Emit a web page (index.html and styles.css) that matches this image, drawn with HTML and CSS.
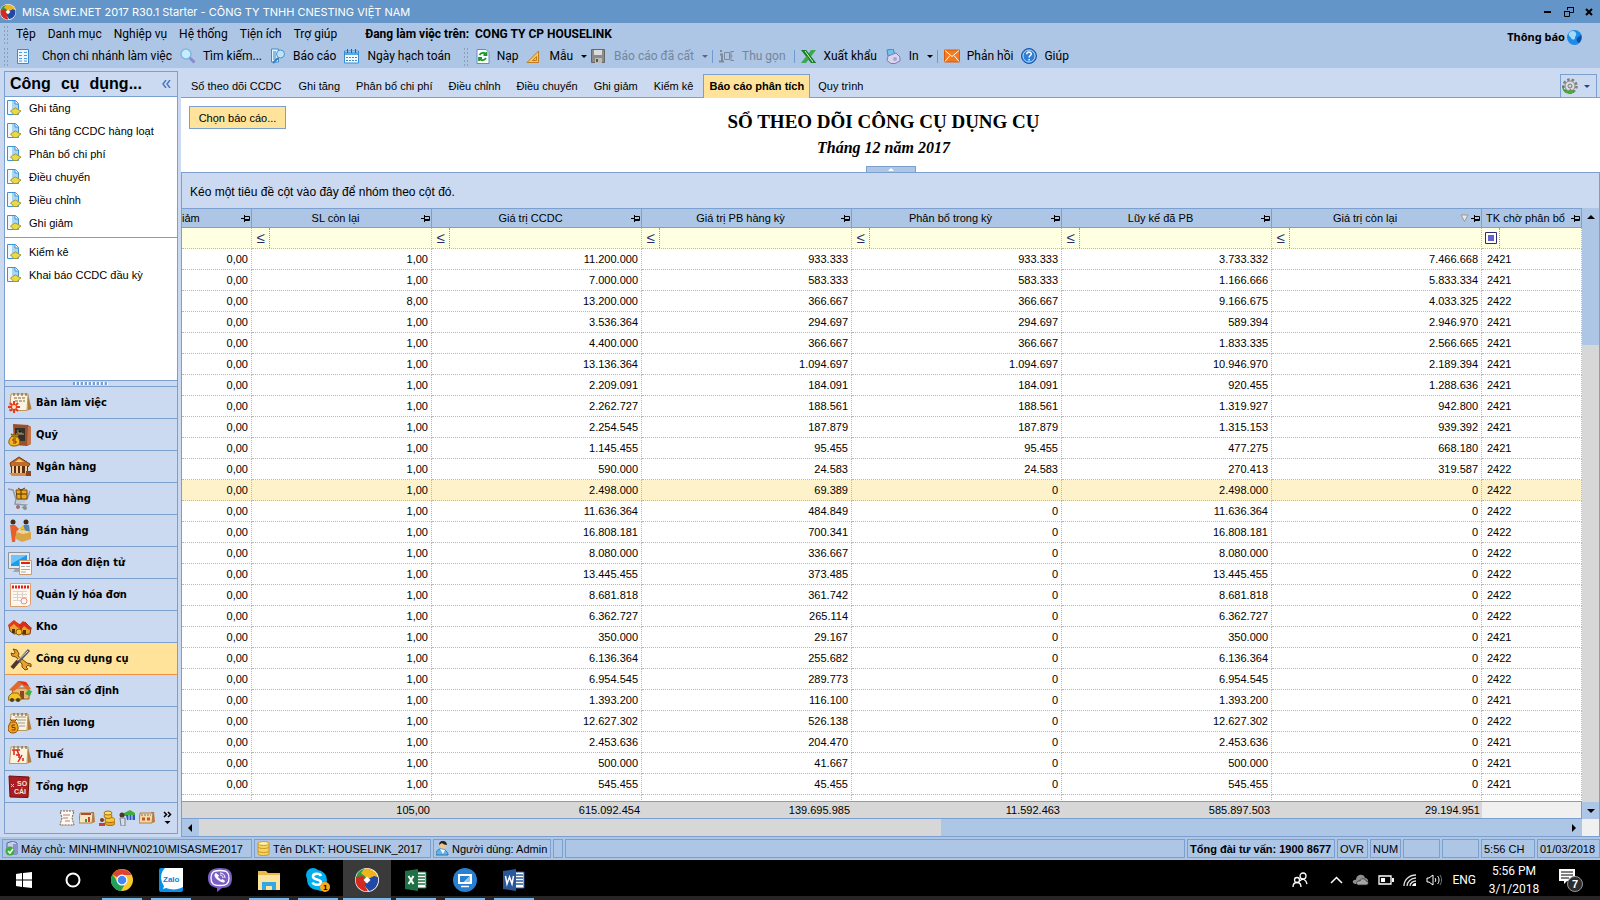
FILE: index.html
```html
<!DOCTYPE html>
<html lang="vi">
<head>
<meta charset="utf-8">
<meta name="viewport" content="width=device-width, initial-scale=1">
<title>MISA SME.NET 2017</title>
<link rel="stylesheet" href="styles.css">
</head>
<body>

<!-- shared icons -->
<svg class="defs" aria-hidden="true">
  <symbol id="pin" viewBox="0 0 9 9"><path d="M0 4.500h3M3.500 1v7M4 2.500h4.500v4H4M4 5.500h4" stroke="#000" fill="none"/></symbol>
  <symbol id="misa" viewBox="0 0 24 24">
    <circle cx="12" cy="12" r="12" fill="#fff"/>
    <path d="M12 12L1 9A11.300 11.300 0 0 1 9 1.100L17 6z" fill="#2f9a3f"/>
    <path d="M9 1A11.300 11.300 0 0 1 22.500 8L17 14 12 10 6 5z" fill="#f0b51c"/>
    <path d="M22.800 9A11.300 11.300 0 0 1 14 23L9 17l4-6 6-3z" fill="#2247a5"/>
    <path d="M1 9l7-1 3 5-1 5 3 5.200A11.300 11.300 0 0 1 1 9z" fill="#d22a20"/>
    <path d="M12 8.500l3.500 3.500-3.500 3.500L8.500 12z" fill="#fff"/>
  </symbol>
  <symbol id="doc" viewBox="0 0 14 15">
    <path d="M.5.500h8l3 3v11H.5z" fill="#eef7fe" stroke="#3f92d0"/><path d="M5 1h3l3 3v5H5z" fill="#a9d4f3"/><path d="M8 .5v3.500h3.500" fill="#fff" stroke="#3f92d0"/>
    <path d="M3.500 11l2-1.500 3-1.500 2.500 1.500 3 1.500-2 1.500-2 2H6.500l-1-1.500z" fill="#e8d94a" stroke="#a8972a"/>
  </symbol>
  <symbol id="calendar" viewBox="0 0 24 20">
    <path d="M20 2l3.500 15-4 1.500z" fill="#b07a3c"/><path d="M3 2h17l-1 16.500H1.500z" fill="#fbf3dc" stroke="#b99865"/><path d="M6 1v3M10 1v3M14 1v3M18 1v3" stroke="#6b5433"/>
  </symbol>
</svg>

<header class="titlebar">
  <svg class="logo"><use href="#misa"/></svg>
  <h1>MISA SME.NET 2017 R30.1 Starter - CÔNG TY TNHH CNESTING VIỆT NAM</h1>
  <button class="win" aria-label="Minimize"><svg width="12" height="12"><path d="M2 6h7" stroke="#000" stroke-width="2"/></svg></button>
  <button class="win" aria-label="Restore"><svg width="12" height="12"><path d="M4.500 4V1.500h6v5H7M4 1.500h7M1.500 5.500h5v5h-5zM1 5.500h6" stroke="#000" fill="none"/></svg></button>
  <button class="win" aria-label="Close"><svg width="12" height="12"><path d="M2 3l6 6M8 3l-6 6" stroke="#000" stroke-width="2"/></svg></button>
</header>

<div class="commands">
  <div class="bars">
    <nav class="menu">
      <i class="grip"></i>
      <button>Tệp</button><button>Danh mục</button><button>Nghiệp vụ</button><button>Hệ thống</button><button>Tiện ích</button><button>Trợ giúp</button>
      <b class="company"><span>Đang làm việc trên:</span> <span>CONG TY CP HOUSELINK</span></b>
    </nav>
    <div class="toolbar">
      <i class="grip"></i>
      <button class="wide"><svg width="14" height="15"><path d="M1.500.500h11v14h-11z" fill="#eef6fd" stroke="#3b8ccc"/><path d="M3 3.500h3M3 6.500h3M3 9.500h3M3 12h3M8 3.500h3M8 6.500h3M8 9.500h3M8 12h3" stroke="#4a9bd8"/></svg>Chọn chi nhánh làm việc</button>
      <button><svg width="16" height="16"><path d="M9.500 9.500l5 5" stroke="#8c8ad0" stroke-width="3"/><circle cx="6" cy="6" r="5" fill="#c9ecfb" stroke="#7db8e2" stroke-width="1.500"/></svg>Tìm kiếm...</button>
      <button><svg width="16" height="16"><path d="M1.500 1h7v13h-7z" fill="#e8f4fd" stroke="#3b8ccc"/><path d="M3 3h3v9H3z" fill="#82bce8"/><path d="M8 10l-5 5" stroke="#3b7cc0" stroke-width="2"/><circle cx="10.500" cy="6" r="4" fill="#bfe2f7" stroke="#4a94cc"/></svg>Báo cáo</button>
      <button><svg width="16" height="15"><path d="M.5 2h14v12H.5z" fill="#f2f9fe" stroke="#3b8ccc"/><path d="M1 3h13v3H1z" fill="#57a9e0"/><path d="M3.500 0v4M7.500 0v4M11.500 0v4" stroke="#1b65a5"/><path d="M2 8.500h11M2 11.500h11" stroke="#3b8ccc" stroke-dasharray="2 1"/></svg>Ngày hạch toán</button>
      <i class="grip"></i>
      <button><svg width="14" height="15"><path d="M1 .500h9l3 3v11H1z" fill="#fff" stroke="#6a86c4"/><path d="M3.500 6C5 3.500 8 3 9.500 5M10.500 3v3h-3M10 9c-1.500 2.500-4.500 3-6 1M3 12V9h3" fill="none" stroke="#179a27" stroke-width="1.800"/></svg>Nạp</button>
      <button class="drop"><svg width="15" height="15"><path d="M1 13.500L12.500 2v11.500z" fill="#f7c95c" stroke="#c07c1e"/><path d="M6.500 11.500l4-4v4z" fill="#adc6e5" stroke="#c07c1e"/></svg>Mẫu<i class="caret"></i></button>
      <button class="drop" disabled><svg width="15" height="15"><path d="M.5.500h13v13H.5z" fill="#8b8b8b" stroke="#666"/><path d="M3 1h8v5H3z" fill="#dcdcdc"/><path d="M4 9h7v5H4z" fill="#bcbcbc"/><path d="M5 10h2v3H5z" fill="#555"/></svg>Báo cáo đã cất<i class="caret"></i></button>
      <i class="sep"></i>
      <button disabled><svg width="16" height="14"><path d="M1 5.500h2v7M0 12.500h5M2 1v2" fill="none" stroke="#7e8a99" stroke-width="2"/><path d="M5.500 3.500h5v7h-5zM10.500 7h3M12 2v10M12 2.500h3M12 11.500h3" fill="none" stroke="#7e8a99"/></svg>Thu gọn</button>
      <i class="sep"></i>
      <button><svg width="16" height="15"><path d="M0 1h5l10 13h-5z" fill="#1c7d29"/><path d="M15 1h-5L0 14h5z" fill="#3cab43"/><path d="M1 1h4l10 13h-4z" fill="#1c7d29"/><path d="M4 2l8 11" stroke="#d9f1d6"/></svg>Xuất khẩu</button>
      <button class="drop"><svg width="16" height="15"><path d="M2 1l6-1 2 6-7 1z" fill="#6fc3ec" stroke="#4187bb"/><path d="M3 7l8-3 4 4v4l-5 2.500H6l-4-3z" fill="#d9d5ee" stroke="#8279b8"/><circle cx="10" cy="10" r="2" fill="#aaa2d6"/></svg>In<i class="caret"></i></button>
      <i class="sep"></i>
      <button><svg width="16" height="14"><path d="M.5 1h15v12H.5z" fill="#f47a20" stroke="#d85a0c"/><path d="M1 1.500l7 6 7-6M1 12.500l5-6M15 12.500l-5-6" fill="none" stroke="#fff"/></svg>Phản hồi</button>
      <button><svg width="16" height="16"><circle cx="8" cy="8" r="7.500" fill="#2f7fd6" stroke="#1a56a5"/><circle cx="8" cy="8" r="6" fill="none" stroke="#b9dcfa"/><path d="M5.800 6.300c0-3 4.500-2.800 4.500-.3 0 1.600-2.200 1.500-2.200 3.500M8.100 11v1.500" fill="none" stroke="#fff" stroke-width="1.500"/></svg>Giúp</button>
    </div>
  </div>
  <a class="notice" href="#">Thông báo<svg width="15" height="15"><circle cx="7.500" cy="7.500" r="7.500" fill="#1d8be8"/><path d="M2 3c3-3 6-2 7 0s-1 3-1 5-3 2-4 0-3-2-2-5z" fill="#9fdcfb"/><path d="M10 8l4-3c1 3 0 6-2 8-2-1-3-3-2-5z" fill="#0a4fa8"/></svg></a>
</div>

<main class="workspace">
  <aside class="sidebar">
    <div class="side-head"><h2><span>Công</span><span>cụ</span><span>dụng...</span></h2><button aria-label="Thu gọn thanh bên"><svg width="9" height="8"><path d="M4 0L1 4l3 4M8 0L5 4l3 4" fill="none" stroke="#4a78bd" stroke-width="1.500"/></svg></button></div>
    <ul class="tasks">
      <li><a href="#"><svg><use href="#doc"/></svg>Ghi tăng</a></li>
      <li><a href="#"><svg><use href="#doc"/></svg>Ghi tăng CCDC hàng loạt</a></li>
      <li><a href="#"><svg><use href="#doc"/></svg>Phân bổ chi phí</a></li>
      <li><a href="#"><svg><use href="#doc"/></svg>Điều chuyển</a></li>
      <li><a href="#"><svg><use href="#doc"/></svg>Điều chỉnh</a></li>
      <li><a href="#"><svg><use href="#doc"/></svg>Ghi giảm</a></li>
      <li class="divided"><a href="#"><svg><use href="#doc"/></svg>Kiểm kê</a></li>
      <li><a href="#"><svg><use href="#doc"/></svg>Khai báo CCDC đầu kỳ</a></li>
    </ul>
    <div class="splitter"><i></i></div>
    <nav class="modules">
      <a href="#"><svg viewBox="0 0 24 24"><use href="#calendar" width="24" height="20" y="1"/><path d="M6 7h12M7 10h10" stroke="#77674c" stroke-dasharray="3 1"/><path d="M6 10v12M0 16h12M2 12l8 8M10 12l-8 8" stroke="#e33b24" stroke-width="2"/><circle cx="6" cy="16" r="2" fill="#ffe1b8"/></svg>Bàn làm việc</a>
      <a href="#"><svg viewBox="0 0 24 24"><path d="M5 1l15 1 3 2v17l-4 2-13-1z" fill="#9a4f28"/><path d="M20 3l3 1v17l-4 1z" fill="#c4764a"/><path d="M7 5h10v13H7z" fill="#33302c"/><path d="M8 11h8M10 7v3h4" stroke="#b6a46a"/><path d="M3 11l2 3h4l2-3-4 1zM4 13c-5 5-4 10 2 10s8-4 3-10z" fill="#f2b61d" stroke="#8a5a0a"/><path d="M8 16H5v2h3v2H5" fill="none" stroke="#8d2b0a"/></svg>Quỹ</a>
      <a href="#"><svg viewBox="0 0 24 24"><path d="M2 8l9-6 11 7-2 3H3z" fill="#c26a2a" stroke="#7c3a12"/><path d="M7 7l4-3 5 3z" fill="#f2d25a"/><path d="M3 11h17v7H3z" fill="#5d2d12"/><path d="M5 11v8M9 11v8M13 11v8M18 11v7" stroke="#efd199" stroke-width="2"/><path d="M1 18h18l3 3H4z" fill="#d78b4a"/><path d="M18 16h5v5h-5z" fill="#8f4520"/></svg>Ngân hàng</a>
      <a href="#"><svg viewBox="0 0 24 24"><path d="M0 2l5 1 3 9h11l3-8M8 12l-1 5 11 1-4 3" fill="none" stroke="#8e99a8" stroke-width="1.500"/><path d="M9 13h9M9 15h8" stroke="#b4bcc8"/><path d="M8 3h11v9H9z" fill="#eaa81c" stroke="#7a4708"/><path d="M13 3v9M8 7h11M10 1l3 2 4-2" stroke="#573206" fill="none"/><circle cx="10" cy="20" r="2" fill="#a56b65"/><circle cx="17" cy="21" r="2" fill="#8b8f98"/></svg>Mua hàng</a>
      <a href="#"><svg viewBox="0 0 24 24"><circle cx="5" cy="3" r="2.500" fill="#4a2b1b"/><path d="M2 6h5l4 4-3 3v2l-1 8H4z" fill="#e7602b"/><circle cx="18" cy="3" r="2.500" fill="#3c2a20"/><path d="M16 6h5l1 8h-6l-3-4z" fill="#4d86b5"/><path d="M8 13l7-2 8 2v7l-9 3-6-3z" fill="#d9a547"/><path d="M8 13l7 2 8-2-8-2z" fill="#f5d68c"/><path d="M11 10l4-4 2 5z" fill="#f0c02c"/></svg>Bán hàng</a>
      <a href="#"><svg viewBox="0 0 24 24"><path d="M.5 1.500h21v16H.5z" fill="#e5e7ea" stroke="#8d949c"/><path d="M3 4h16v11H3z" fill="#1e9bea"/><path d="M3 4h16L3 13z" fill="#6cc6fa"/><path d="M7 18h6v3H5z" fill="#9fa6ad"/><path d="M11.500 9.500h12v14h-12z" fill="#fff8f2" stroke="#c79a6d"/><path d="M13 12h9" stroke="#e01f1f" stroke-width="2"/><path d="M13 15.500h4M18 15.500h4M13 18.500h9M13 21h5" stroke="#aaa"/></svg>Hóa đơn điện tử</a>
      <a href="#"><svg viewBox="0 0 24 24"><path d="M2.500.500h20v21l-3 2h-17z" fill="#fff8f0" stroke="#d9a06f"/><path d="M4 4h17" stroke="#e01f1f" stroke-width="3" stroke-dasharray="2 1"/><path d="M5 8.500h14M5 11.500h14M5 14.500h14M5 17.500h8M9.500 8v10M14.500 8v7" stroke="#dcd2cc"/><circle cx="16" cy="18" r="3" fill="none" stroke="#e58b8b"/></svg>Quản lý hóa đơn</a>
      <a href="#"><svg viewBox="0 0 24 24"><path d="M1 10l5-4 6 4v8l-6 1-4-3z" fill="#eca82a" stroke="#7d3c0c"/><path d="M0 10l6-5 7 6-3 2-4-4-5 4z" fill="#e33b1f"/><path d="M12 11l5-4 6 6-1 6-7 1z" fill="#e8a325" stroke="#7d3c0c"/><path d="M11 10l4-4 9 7-3 2-5-4-3 4z" fill="#d82e1a"/><path d="M4 18v-4h3v4M15 19v-4h3v4" fill="#5b2f08"/><circle cx="11" cy="17" r="3" fill="#f4c130" stroke="#8a5a0a"/></svg>Kho</a>
      <a href="#" class="active"><svg viewBox="0 0 24 24"><path d="M5 2l4 1 2 4-1 2 9 7 4 1v3l-3-2-2 2 2 2-3 1-3-3v-3L8 10 4 9 3 6l3 1 1-2z" fill="#e9a12c" stroke="#7a4a0b"/><path d="M21 3L10 15" stroke="#5a5c60" stroke-width="3"/><path d="M20 4L9 14" stroke="#d9dde2"/><path d="M10 14l-6 7" stroke="#4c3a28" stroke-width="4"/></svg>Công cụ dụng cụ</a>
      <a href="#"><svg viewBox="0 0 24 24"><path d="M4 9h17v11H6z" fill="#e9b777" stroke="#a0612a"/><path d="M1 11l9-9 8 1 5 7-4 1-5-5-8 6z" fill="#df6a2a"/><path d="M10 2l8 1 3 4-5-1z" fill="#e6311f"/><path d="M12 12h4v8h-4z" fill="#8a4a1d"/><path d="M1 17l3-3h6l3 4v3H0z" fill="#f5c21f" stroke="#936a0b"/><path d="M17 15l3-4 4 1-2 5z" fill="#45ad3c"/><circle cx="4" cy="21" r="2" fill="#4a3b20"/><circle cx="10" cy="21" r="2" fill="#4a3b20"/></svg>Tài sản cố định</a>
      <a href="#"><svg viewBox="0 0 24 24"><use href="#calendar" width="24" height="20" y="1"/><path d="M7 6h11M9 9h9M10 12h7M11 15h6" stroke="#9a9a90"/><path d="M2 8l2 2h3l2-2M3 11c-5 6-3 11 2 11s7-5 3-11z" fill="#f0a81a" stroke="#8a4c08"/><path d="M7 14H4v2.500h3V19H3.500" fill="none" stroke="#8d2b0a"/></svg>Tiền lương</a>
      <a href="#"><svg viewBox="0 0 24 24"><use href="#calendar" width="24" height="20" y="2"/><path d="M4 7h8M6 7v5M9 7l2 5M8 12h4M14 12l-4 7M15 18v-3M11 12v3" stroke="#e02020" stroke-width="1.500"/></svg>Thuế</a>
      <a href="#"><svg viewBox="0 0 24 24"><path d="M20 2l3-1-1 20-3 2z" fill="#e2c9a8"/><path d="M1 1l20 1-1 20.500L2 22z" fill="#a81e22" stroke="#6d1013"/><text x="9" y="11" class="book">SỔ</text><text x="6" y="19" class="book">CÁI</text><path d="M3 9l3 3M6 9l-3 3" stroke="#f2c9a0"/></svg>Tổng hợp</a>
    </nav>
    <div class="more">
      <button aria-label="Chứng từ"><svg viewBox="0 0 16 16"><path d="M1 1h14l-2 7 2 7H1l2-7z" fill="#fffaf0" stroke="#75624b" stroke-dasharray="2 1"/><path d="M4 5h7M4 8h5M6 11h5" stroke="#b9787f"/></svg></button>
      <button aria-label="Báo cáo nhanh"><svg viewBox="0 0 16 16"><path d="M12 2h3l1 10-3 1z" fill="#b87a3a"/><path d="M1 3h13l-1 10H0z" fill="#f6e5c5" stroke="#b27c45"/><path d="M2 4h10" stroke="#b04a2a" stroke-width="2"/><path d="M7 12V9" stroke="#28a23a" stroke-width="2"/><path d="M10 12V7" stroke="#e03a20" stroke-width="2"/></svg></button>
      <button aria-label="Giá thành"><svg viewBox="0 0 16 16"><ellipse cx="11" cy="13" rx="5" ry="2.500" fill="#e9a51a" stroke="#a86f0c"/><ellipse cx="11" cy="10" rx="5" ry="2.500" fill="#f7c737" stroke="#a86f0c"/><ellipse cx="9" cy="6" rx="4" ry="2.500" fill="#f7c737" stroke="#a86f0c"/><ellipse cx="9" cy="3" rx="4" ry="2" fill="#fbdc6a" stroke="#a86f0c"/><circle cx="3" cy="10" r="2" fill="#7b3a1c"/><path d="M0 16v-3h6v3z" fill="#cf3d32"/></svg></button>
      <button aria-label="Hợp đồng"><svg viewBox="0 0 16 16"><path d="M5 3l6-3 5 3v3H5z" fill="#3fae3a"/><path d="M7 5h9v5H8z" fill="#2f57c4"/><path d="M10 5v5M13 5v5" stroke="#dce6fa"/><circle cx="3" cy="5" r="2.500" fill="#4b3a2c"/><path d="M1 8h5v8H2z" fill="#d7dee6" stroke="#7a828c"/></svg></button>
      <button aria-label="Ngân sách"><svg viewBox="0 0 16 16"><path d="M12 2h3l1 10-3 1z" fill="#b87a3a"/><path d="M1 3h13l-1 10H0z" fill="#f3d9ab" stroke="#b27c45"/><path d="M2 5h10" stroke="#777" stroke-dasharray="2 1"/><path d="M3 9h3M8 9h3" stroke="#c45a1b" stroke-width="3"/></svg></button>
      <button aria-label="Xem thêm"><svg viewBox="0 0 10 16"><path d="M1 2l2.500 2.500L1 7M5 2l2.500 2.500L5 7" fill="none" stroke="#000" stroke-width="1.500"/><path d="M1.500 11h6l-3 3z"/></svg></button>
    </div>
  </aside>

  <section class="content">
    <nav class="tabs">
      <a href="#">Sổ theo dõi CCDC</a><a href="#">Ghi tăng</a><a href="#">Phân bổ chi phí</a><a href="#">Điều chỉnh</a><a href="#">Điều chuyển</a><a href="#">Ghi giảm</a><a href="#">Kiểm kê</a><a href="#" class="active">Báo cáo phân tích</a><a href="#">Quy trình</a>
      <button class="gear" aria-label="Tùy chọn"><svg width="16" height="16"><circle cx="8" cy="8" r="6.500" fill="none" stroke="#7d7d7d" stroke-width="2.500" stroke-dasharray="2.500 2"/><circle cx="8" cy="8" r="5" fill="#dedede" stroke="#8a8a8a"/><circle cx="8" cy="8" r="2" fill="#cbdaf0" stroke="#777"/><path d="M1 8c0 4 3 6 7 5v-2l4 3-4 2.500V15C3 16 0 12 1 8z" fill="#4cb82b" stroke="#2c8214" stroke-width=".5"/></svg><i class="caret"></i></button>
    </nav>

    <div class="report-head">
      <button class="pick">Chọn báo cáo...</button>
      <div class="report-title">
        <h2>SỔ THEO DÕI CÔNG CỤ DỤNG CỤ</h2>
        <p>Tháng 12 năm 2017</p>
      </div>
    </div>
    <div class="fold"><button aria-label="Thu gọn"><svg width="6" height="4"><path d="M0 3h6L3 0z" fill="#fff"/></svg></button></div>

    <div class="grid">
      <p class="group">Kéo một tiêu đề cột vào đây để nhóm theo cột đó.</p>
      <div class="grid-body">
        <div class="grid-main">
          <div class="rows">
            <table>
              <colgroup><col class="c-cut"><col class="c-qty"><col class="c-num"><col class="c-num"><col class="c-num"><col class="c-num"><col class="c-num"><col></colgroup>
              <thead>
                <tr>
                  <th><div><span class="cut">iảm</span><svg><use href="#pin"/></svg></div></th>
                  <th><div><span>SL còn lại</span><svg><use href="#pin"/></svg></div></th>
                  <th><div><span>Giá trị CCDC</span><svg><use href="#pin"/></svg></div></th>
                  <th><div><span>Giá trị PB hàng kỳ</span><svg><use href="#pin"/></svg></div></th>
                  <th><div><span>Phân bổ trong kỳ</span><svg><use href="#pin"/></svg></div></th>
                  <th><div><span>Lũy kế đã PB</span><svg><use href="#pin"/></svg></div></th>
                  <th><div><span>Giá trị còn lại</span><svg viewBox="0 0 9 9"><path d="M1 1h7L4.500 7.500z" fill="#e8e8e8" stroke="#999"/></svg><svg><use href="#pin"/></svg></div></th>
                  <th><div><span>TK chờ phân bổ</span><svg><use href="#pin"/></svg></div></th>
                </tr>
                <tr class="filter">
                  <td><div><input aria-label="Lọc SL giảm"></div></td>
                  <td><div><button>≤</button><input aria-label="Lọc SL còn lại"></div></td>
                  <td><div><button>≤</button><input aria-label="Lọc giá trị CCDC"></div></td>
                  <td><div><button>≤</button><input aria-label="Lọc giá trị PB hàng kỳ"></div></td>
                  <td><div><button>≤</button><input aria-label="Lọc phân bổ trong kỳ"></div></td>
                  <td><div><button>≤</button><input aria-label="Lọc lũy kế đã PB"></div></td>
                  <td><div><button>≤</button><input aria-label="Lọc giá trị còn lại"></div></td>
                  <td><div><button aria-label="Chứa"><svg width="12" height="12"><path d="M.5.500h11v11H.5z" fill="#fff" stroke="#2b2b7a"/><path d="M3 3h6v6H3z" fill="#6464cc"/></svg></button><input aria-label="Lọc TK chờ phân bổ"></div></td>
                </tr>
              </thead>
              <tbody id="data"></tbody>
            </table>
          </div>
          <table class="totals">
            <colgroup><col class="c-cut"><col class="c-qty"><col class="c-num"><col class="c-num"><col class="c-num"><col class="c-num"><col class="c-num"><col></colgroup>
            <tbody><tr><td></td><td>105,00</td><td>615.092.454</td><td>139.695.985</td><td>11.592.463</td><td>585.897.503</td><td>29.194.951</td><td class="blank"></td></tr></tbody>
          </table>
        </div>
        <div class="vscroll">
          <div class="vthumb"><svg width="8" height="4"><path d="M0 4h8L4 0z"/></svg></div>
          <div class="vtrack"></div>
          <div class="varrow"><svg width="8" height="4"><path d="M0 0h8L4 4z"/></svg></div>
        </div>
      </div>
      <div class="hscroll">
        <div class="harrow"><svg width="4" height="8"><path d="M4 0v8L0 4z"/></svg></div>
        <div class="htrack"></div>
        <div class="hthumb"><svg width="4" height="8"><path d="M0 0v8l4-4z"/></svg></div>
        <div class="corner"></div>
      </div>
    </div>
  </section>
</main>

<footer class="status">
  <span class="s-server"><svg width="13" height="15"><path d="M2 2l6-2 4 2v11H2z" fill="#c7cfe8" stroke="#5c63a6"/><path d="M8 3h4v10H8z" fill="#8e93cf"/><circle cx="5" cy="10" r="4.500" fill="#3faf3c"/><path d="M3 10l2 2 3-4" fill="none" stroke="#fff" stroke-width="1.500"/></svg>Máy chủ: MINHMINHVN0210\MISASME2017</span>
  <span class="s-db"><svg width="13" height="15"><path d="M1 2v11c1 2 10 2 11 0V2z" fill="#f9d45c" stroke="#c8962a"/><ellipse cx="6.500" cy="2.500" rx="5.500" ry="2" fill="#fdeeb0" stroke="#c8962a"/><path d="M1 6c1 2 10 2 11 0M1 10c1 2 10 2 11 0" fill="none" stroke="#c8962a"/></svg>Tên DLKT: HOUSELINK_2017</span>
  <span class="s-user"><svg width="13" height="15"><path d="M0 14c0-4 2-6 5-6s7 2 7 6z" fill="#5fb4ea" stroke="#2c78b5"/><path d="M4 8l3 5 2-4z" fill="#fff"/><circle cx="7" cy="4" r="3.500" fill="#f2c48a"/><path d="M3 4c0-6 8-5 8 0-2 0-4-1-5-2-1 1-2 1-3 2z" fill="#222"/></svg>Người dùng: Admin</span>
  <span class="s-tiny"></span>
  <span class="s-fill"></span>
  <span class="s-call">Tổng đài tư vấn: 1900 8677</span>
  <span class="s-key">OVR</span>
  <span class="s-key">NUM</span>
  <span class="s-empty"></span>
  <span class="s-empty"></span>
  <span class="s-time">5:56 CH</span>
  <span class="s-date">01/03/2018</span>
</footer>

<div class="taskbar">
  <button aria-label="Start"><svg viewBox="0 0 24 24"><path d="M4 6l6-1v6.500H4zM11 5l9-1v7.500h-9zM4 12.500h6V19l-6-1zM11 12.500h9V20l-9-1z" fill="#fff"/></svg></button>
  <button aria-label="Cortana"><svg viewBox="0 0 24 24"><circle cx="12" cy="12" r="6.500" fill="none" stroke="#fff" stroke-width="2"/></svg></button>
  <button class="open" aria-label="Chrome"><svg viewBox="0 0 24 24"><circle cx="12" cy="12" r="11" fill="#f6c92c"/><path d="M12 12L2.500 6.500A11 11 0 0 1 21.500 7H12z" fill="#dd4335"/><path d="M2.500 6.500A11 11 0 0 0 11 23l5-9-4 2-5-3z" fill="#21a05a"/><circle cx="12" cy="12" r="5.500" fill="#fff"/><circle cx="12" cy="12" r="4.300" fill="#4387f4"/></svg></button>
  <button class="open" aria-label="Zalo"><svg viewBox="0 0 24 24"><path d="M2 0h20a2 2 0 0 1 2 2v20a2 2 0 0 1-2 2H2a2 2 0 0 1-2-2V2a2 2 0 0 1 2-2z" fill="#0a8fe8"/><path d="M6 0h18v19c-5 3-12 3-17 1l-3 1 1-3C1 12 1 5 6 0z" fill="#fff"/><text x="4" y="14" class="zalo">Zalo</text></svg></button>
  <button aria-label="Viber"><svg viewBox="0 0 24 24"><path d="M12 0c9 0 12 3 12 10s-3 10-10 10l-5 4v-4c-6-1-9-4-9-10S3 0 12 0z" fill="#7b5fc4"/><path d="M12 2.500c7 0 9 2 9 7.500s-2 7.500-9 7.500S3 15.500 3 10s2-7.500 9-7.500z" fill="#7b5fc4" stroke="#fff" stroke-width="1.300"/><path d="M8 5c-3 1-1 5 2 7s6 4 7 1l-2.500-2-1.500 1-3-3 1-1.500z" fill="#fff"/><path d="M12 5c3 0 5 2 5 5M12 7c2 0 3 1 3 3" fill="none" stroke="#fff"/></svg></button>
  <button class="open" aria-label="File Explorer"><svg viewBox="0 0 24 24"><path d="M1 3h8l2 2h12v17H1z" fill="#e9b94a"/><path d="M1 7h22v15H1z" fill="#fbe3a0"/><path d="M5 22v-8h14v8h-4v-4H9v4z" fill="#35a7e0"/></svg></button>
  <button class="open" aria-label="Skype"><svg viewBox="0 0 24 24"><circle cx="7" cy="7" r="7" fill="#00aff0"/><circle cx="11" cy="12" r="10" fill="#00aff0"/><circle cx="15" cy="17" r="6" fill="#00aff0"/><path d="M15 8c-1-3-8-3-8 .5 0 4 8 2 8 6 0 3-7 3-8.500 0" fill="none" stroke="#fff" stroke-width="2.600"/><circle cx="19" cy="19" r="5" fill="#fba919"/><text x="17" y="22" class="badge-num">1</text></svg></button>
  <button class="open current" aria-label="MISA"><svg><use href="#misa"/></svg></button>
  <button class="open" aria-label="Excel"><svg viewBox="0 0 24 24"><path d="M12 4h10v16H12z" fill="#fff" stroke="#1e7145"/><path d="M14 7h7M14 10h7M14 13h7M14 16h7" stroke="#1e7145" stroke-width="1.500"/><path d="M1 3l13-2v22L1 21z" fill="#1e7145"/><path d="M4.500 8l5 8M9.500 8l-5 8" stroke="#fff" stroke-width="2"/></svg></button>
  <button class="open" aria-label="TeamViewer"><svg viewBox="0 0 24 24"><circle cx="12" cy="12" r="12" fill="#2a80d0"/><path d="M5 6h14v10H5z" fill="#fff"/><path d="M7 8h10l-6 6H7z" fill="#2a80d0"/><path d="M17 8v6h-5z" fill="#8fc0ee"/><path d="M8 18.500h8" stroke="#fff" stroke-width="1.500"/></svg></button>
  <button class="open" aria-label="Word"><svg viewBox="0 0 24 24"><path d="M12 4h10v16H12z" fill="#fff" stroke="#2b579a"/><path d="M14 7h7M14 10h7M14 13h7M14 16h7" stroke="#2b579a" stroke-width="1.500"/><path d="M1 3l13-2v22L1 21z" fill="#2b579a"/><path d="M3.500 8l1.500 8 2.500-7L10 16l1.500-8" fill="none" stroke="#fff" stroke-width="1.500"/></svg></button>
  <div class="tray">
    <svg width="16" height="16"><circle cx="11" cy="4" r="3" fill="none" stroke="#fff" stroke-width="1.300"/><circle cx="5" cy="8" r="2.500" fill="none" stroke="#fff" stroke-width="1.300"/><path d="M1 15c0-6 8-6 8 0M8 9c2-3 6-2 7 3" fill="none" stroke="#fff" stroke-width="1.300"/></svg>
    <svg class="chev" width="13" height="8"><path d="M1 7l5.500-5.500L12 7" fill="none" stroke="#fff" stroke-width="1.500"/></svg>
    <svg width="17" height="12"><path d="M3 10C-1 9 1 5 4 6c0-6 8-7 9-2 4 0 4 6 1 6z" fill="#8e8e8e"/><path d="M6 11c-3-1-1-5 2-4 1-4 6-2 6 0 3 0 3 4 0 4z" fill="#a6a6a6" stroke="#222" stroke-width=".7"/></svg>
    <svg width="16" height="10"><path d="M1 1h12v8H1z" fill="none" stroke="#fff" stroke-width="1.300"/><path d="M3 3h4v4H3zM14 3h2v4h-2z" fill="#fff"/></svg>
    <svg width="14" height="13"><path d="M1 12C1 6 6 1 13 1M4 12c0-4 4-8 9-8M7 12c0-3 3-5 6-5" fill="none" stroke="#ddd" stroke-width="1.300"/><path d="M9 12a4 4 0 0 1 4-3v3z" fill="#fff"/></svg>
    <svg width="17" height="12"><path d="M1 4h2l4-3v10L3 8H1z" fill="none" stroke="#fff"/><path d="M9 4c1 1 1 3 0 4M11.500 2c2 2 2 6 0 8" fill="none" stroke="#fff"/><path d="M14 1c2 3 2 7 0 10" fill="none" stroke="#777"/></svg>
    <span>ENG</span>
    <div class="clock"><span>5:56 PM</span><span>3/1/2018</span></div>
    <svg class="notes" width="25" height="24"><path d="M1 1h16v12H9l-3 3v-3H1z" fill="#fff"/><path d="M3 4h12M3 7h12M3 10h8" stroke="#000"/><circle cx="17" cy="16" r="7.500" fill="#2d2d2d" stroke="#999"/><text x="14" y="20">7</text></svg>
  </div>
</div>

<script src="script.js"></script>
</body>
</html>
```
FILE: styles.css
```css
* { box-sizing: border-box; }

body {
  margin: 0;
  height: 100vh;
  display: flex;
  flex-direction: column;
  overflow: hidden;
  background: #cbdaf0;
  color: #000;
  font: 11px/14px "Liberation Sans", Arial, sans-serif;
}

h1, h2, p, ul { margin: 0; padding: 0; font: inherit; }
ul { list-style: none; }
a { color: inherit; text-decoration: none; }
button { margin: 0; padding: 0; border: 0; background: none; color: inherit; font: inherit; white-space: nowrap; }
svg { flex: none; display: block; }
.defs { position: absolute; width: 0; height: 0; }

.caret {
  width: 0;
  border: 3px solid transparent;
  border-top-color: #000;
  border-bottom: 0;
}

/* title bar */
.titlebar {
  display: flex;
  align-items: center;
  height: 23px;
  padding-right: 4px;
  background: #6495c8;
}
.titlebar h1 { flex: 1; margin-left: 6px; color: #fff; font: 11px/16px Inter, sans-serif; }
.logo { width: 16px; height: 16px; }
.win { width: 12px; margin-left: 9px; }

/* menu and toolbar */
.commands {
  display: flex;
  justify-content: space-between;
  height: 45px;
  background: #adc6e5;
  font: 12px/16px Roboto, sans-serif;
}
.menu, .toolbar { display: flex; align-items: center; height: 22px; padding-left: 3px; }
.grip {
  width: 5px;
  height: 19px;
  background: radial-gradient(circle, #8f9fb8 1px, transparent 1px) 0 0 / 3px 4px;
}
.menu button { margin-left: 12px; }
.menu .grip + button { margin-left: 8px; }
.company { margin-left: 28px; }
.company span { margin-right: 3px; }
.toolbar button { display: flex; align-items: center; gap: 7px; margin-left: 8px; }
.toolbar .wide { gap: 12px; }
.toolbar .drop { gap: 8px; margin-right: -4px; }
.toolbar button:disabled { color: #75859b; }
.toolbar button:disabled .caret { border-top-color: #59697f; }
.toolbar .grip { margin-left: 12px; }
.toolbar .grip:first-child { margin-left: 0; }
.toolbar .sep { width: 1px; height: 13px; margin-left: 8px; background: #6f9ad0; }
.toolbar .sep + button { margin-left: 6px; }
.notice { display: flex; align-items: center; gap: 2px; height: 28px; padding-right: 18px; font: bold 11px/16px "Noto Sans", sans-serif; }

.workspace { flex: 1; min-height: 0; display: flex; }

/* sidebar */
.sidebar {
  display: flex;
  flex-direction: column;
  width: 174px;
  margin: 3px 3px 3px 4px;
  border: 1px solid #7ba0d0;
}
.side-head {
  display: flex;
  align-items: center;
  justify-content: space-between;
  height: 25px;
  padding: 0 6px 0 5px;
  border-bottom: 1px solid #7ba0d0;
}
.side-head h2 { display: flex; gap: 10px; font: bold 16px/20px "Liberation Sans", Arial, sans-serif; }
.tasks { flex: 1; min-height: 0; overflow: hidden; background: #fff; }
.tasks a { display: flex; align-items: center; gap: 8px; height: 23px; padding: 0 0 2px 2px; }
.tasks svg { width: 14px; height: 15px; }
.tasks .divided { margin-top: 2px; padding-top: 3px; border-top: 1px solid #7ba0d0; }
.splitter { display: flex; align-items: center; justify-content: center; height: 7px; border: solid #7ba0d0; border-width: 1px 0; }
.splitter i { width: 36px; height: 3px; background: repeating-linear-gradient(90deg, #7ba0d0 0 2px, #fff 2px 3px, transparent 3px 4px); }
.modules a {
  display: flex;
  align-items: center;
  gap: 4px;
  height: 32px;
  padding: 1px 0 0 3px;
  border-bottom: 1px solid #7ba0d0;
  font: bold 11px/16px "DejaVu Sans Condensed", Tahoma, sans-serif;
}
.modules svg { width: 24px; height: 24px; }
.modules .active { background: #ffe39b; border-color: #f09040; }
.book { fill: #f7e7d7; font: bold 7px "Liberation Sans", sans-serif; }
.more { display: flex; align-items: center; justify-content: flex-end; gap: 4px; height: 30px; padding-right: 4px; }
.more svg { width: 16px; height: 16px; }
.more button:last-child { margin-left: 4px; }
.more button:last-child svg { width: 10px; }

/* tabs */
.content { flex: 1; min-width: 0; display: flex; flex-direction: column; }
.tabs {
  display: flex;
  align-items: flex-end;
  height: 30px;
  padding-right: 3px;
  border-bottom: 1px solid #7ba0d0;
}
.tabs a { height: 23px; padding: 5px 8px 0; white-space: nowrap; }
.tabs a:first-child { padding: 5px 9px 0 10px; }
.tabs .active { margin-bottom: -1px; margin-left: 2px; height: 24px; padding: 4px 5px 0; border: 1px solid #7ba0d0; border-bottom: 0; background: #ffe39b; font-weight: bold; }
.gear { display: flex; align-items: center; gap: 6px; width: 37px; height: 23px; margin-left: auto; padding-left: 1px; border: 1px solid #7ba0d0; border-bottom: 0; }
.gear .caret { border-top-color: #1f4596; }

/* report heading */
.report-head {
  display: grid;
  grid-template-columns: 1fr auto 1fr;
  padding: 8px 22px 0 8px;
  height: 68px;
  background: #fff;
}
.pick { justify-self: start; width: 97px; height: 23px; border: 1px solid #7ba0d0; background: #ffe39b; }
.report-title { text-align: center; font-family: "Liberation Serif", "Times New Roman", serif; }
.report-title h2 { margin-top: 4px; font-weight: bold; font-size: 19px; line-height: 24px; }
.report-title p { margin-top: 4px; font-size: 16px; line-height: 20px; font-style: italic; font-weight: bold; }
.fold { display: flex; justify-content: center; background: #fff; }
.fold button { display: flex; align-items: center; justify-content: center; width: 50px; height: 6px; border: 1px solid #7ba0d0; border-bottom: 0; background: #adc6e5; }

/* grid */
.grid {
  flex: 1;
  min-height: 0;
  display: flex;
  flex-direction: column;
  border: 1px solid #7ba0d0;
}
.group { height: 35px; padding: 12px 8px 0; font-size: 12px; }
.grid-body { flex: 1; min-height: 0; display: flex; }
.grid-main { flex: 1; min-width: 0; display: flex; flex-direction: column; }
.rows { flex: 1; min-height: 0; overflow: hidden; background: #fff; }
table { width: 100%; table-layout: fixed; border-collapse: separate; border-spacing: 0; }
.c-cut { width: 70px; }
.c-qty { width: 180px; }
.c-num { width: 210px; }
th {
  height: 20px;
  padding: 0;
  border: solid #7ba0d0;
  border-width: 1px 1px 1px 0;
  background: #adc6e5;
  font-weight: normal;
}
th div { display: flex; align-items: center; padding-right: 1px; }
th span { flex: 1; text-align: center; white-space: nowrap; }
th .cut { text-align: left; }
th svg { width: 9px; height: 9px; margin-left: 2px; }
td { height: 21px; padding: 0 3px 0 5px; border: dotted #b8b8b8; border-width: 0 1px 1px 0; text-align: right; }
td:last-child { text-align: left; }
.filter td { padding: 0; background: #ffffe1; }
.filter div { display: flex; height: 20px; }
.filter button { display: flex; align-items: center; justify-content: center; width: 18px; border-right: 1px dotted #999; color: #2b2b6a; font-size: 15px; }
.filter input { flex: 1; min-width: 0; width: 100%; padding: 0 3px; border: 0; background: none; font: inherit; }
.selected td { background: #fef2cb; }
.totals td { height: 18px; padding-right: 2px; border: solid #7ba0d0; border-width: 1px 0; background: #d7d7d7; }
.totals .blank { background: #f0f0f0; border-right-width: 1px; }

/* scroll bars */
.vscroll { display: flex; flex-direction: column; width: 17px; background: #d7d7d7; }
.vthumb { flex: 130; padding: 7px 0 0 5px; background: #adc6e5; }
.vtrack { flex: 457; }
.varrow { height: 17px; padding: 7px 0 0 5px; background: #adc6e5; }
.hscroll { display: flex; height: 17px; background: #d7d7d7; }
.harrow { width: 17px; padding: 5px 0 0 6px; background: #adc6e5; }
.htrack { flex: 742; }
.hthumb { flex: 635; display: flex; align-items: center; justify-content: flex-end; padding-right: 6px; background: #adc6e5; }
.corner { width: 17px; background: #f0f0f0; }

/* status bar */
.status { display: flex; gap: 2px; height: 23px; padding: 2px 0 2px 2px; background: #adc6e5; }
.status span { display: flex; align-items: center; gap: 3px; padding: 0 2px; border: 1px solid #7ba0d0; white-space: nowrap; }
.s-server { width: 250px; }
.s-db { width: 177px; }
.s-user { width: 118px; }
.s-tiny { width: 10px; }
.s-fill { flex: 1; }
.s-call { width: 148px; font-weight: bold; }
.s-key { width: 31px; }
.s-empty { width: 37px; }
.s-time { width: 54px; }
.s-date { width: 63px; }

/* taskbar */
.taskbar { display: flex; gap: 1px; height: 40px; background: linear-gradient(#000 36px, #262626 36px); color: #fff; }
.taskbar button { display: flex; align-items: center; justify-content: center; width: 48px; height: 40px; }
.taskbar button svg { width: 24px; height: 24px; }
.taskbar .open { background: linear-gradient(#76b9ed, #76b9ed) center bottom / 40px 2px no-repeat; }
.taskbar .current { background: linear-gradient(#3a3a3a 38px, #76b9ed 38px); }
.zalo { fill: #0a7fdc; font: bold 8px "Liberation Sans", sans-serif; }
.badge-num { font: bold 8px "Liberation Sans", sans-serif; }
.tray { flex: 1; display: flex; align-items: center; justify-content: flex-end; gap: 9px; padding-right: 17px; font: 12px/18px Roboto, sans-serif; }
.chev { margin-left: 13px; }
.clock { display: flex; flex-direction: column; width: 58px; margin-right: 6px; text-align: center; }
.notes text { fill: #fff; font: bold 11px "Liberation Sans", sans-serif; }
```
FILE: script.js
```js
var lines = [
  "0,00|1,00|11.200.000|933.333|933.333|3.733.332|7.466.668|2421",
  "0,00|1,00|7.000.000|583.333|583.333|1.166.666|5.833.334|2421",
  "0,00|8,00|13.200.000|366.667|366.667|9.166.675|4.033.325|2422",
  "0,00|1,00|3.536.364|294.697|294.697|589.394|2.946.970|2421",
  "0,00|1,00|4.400.000|366.667|366.667|1.833.335|2.566.665|2421",
  "0,00|1,00|13.136.364|1.094.697|1.094.697|10.946.970|2.189.394|2421",
  "0,00|1,00|2.209.091|184.091|184.091|920.455|1.288.636|2421",
  "0,00|1,00|2.262.727|188.561|188.561|1.319.927|942.800|2421",
  "0,00|1,00|2.254.545|187.879|187.879|1.315.153|939.392|2421",
  "0,00|1,00|1.145.455|95.455|95.455|477.275|668.180|2421",
  "0,00|1,00|590.000|24.583|24.583|270.413|319.587|2422",
  "0,00|1,00|2.498.000|69.389|0|2.498.000|0|2422",
  "0,00|1,00|11.636.364|484.849|0|11.636.364|0|2422",
  "0,00|1,00|16.808.181|700.341|0|16.808.181|0|2422",
  "0,00|1,00|8.080.000|336.667|0|8.080.000|0|2422",
  "0,00|1,00|13.445.455|373.485|0|13.445.455|0|2422",
  "0,00|1,00|8.681.818|361.742|0|8.681.818|0|2422",
  "0,00|1,00|6.362.727|265.114|0|6.362.727|0|2422",
  "0,00|1,00|350.000|29.167|0|350.000|0|2421",
  "0,00|1,00|6.136.364|255.682|0|6.136.364|0|2422",
  "0,00|1,00|6.954.545|289.773|0|6.954.545|0|2422",
  "0,00|1,00|1.393.200|116.100|0|1.393.200|0|2421",
  "0,00|1,00|12.627.302|526.138|0|12.627.302|0|2422",
  "0,00|1,00|2.453.636|204.470|0|2.453.636|0|2421",
  "0,00|1,00|500.000|41.667|0|500.000|0|2421",
  "0,00|1,00|545.455|45.455|0|545.455|0|2421",
  "|||||||"
];
var selected = 11;
var body = document.getElementById("data");

for (var i = 0; i < lines.length; i++) {
  var row = body.insertRow();
  if (i == selected) row.className = "selected";
  var cells = lines[i].split("|");
  for (var j = 0; j < cells.length; j++) {
    row.insertCell().textContent = cells[j];
  }
}
```
